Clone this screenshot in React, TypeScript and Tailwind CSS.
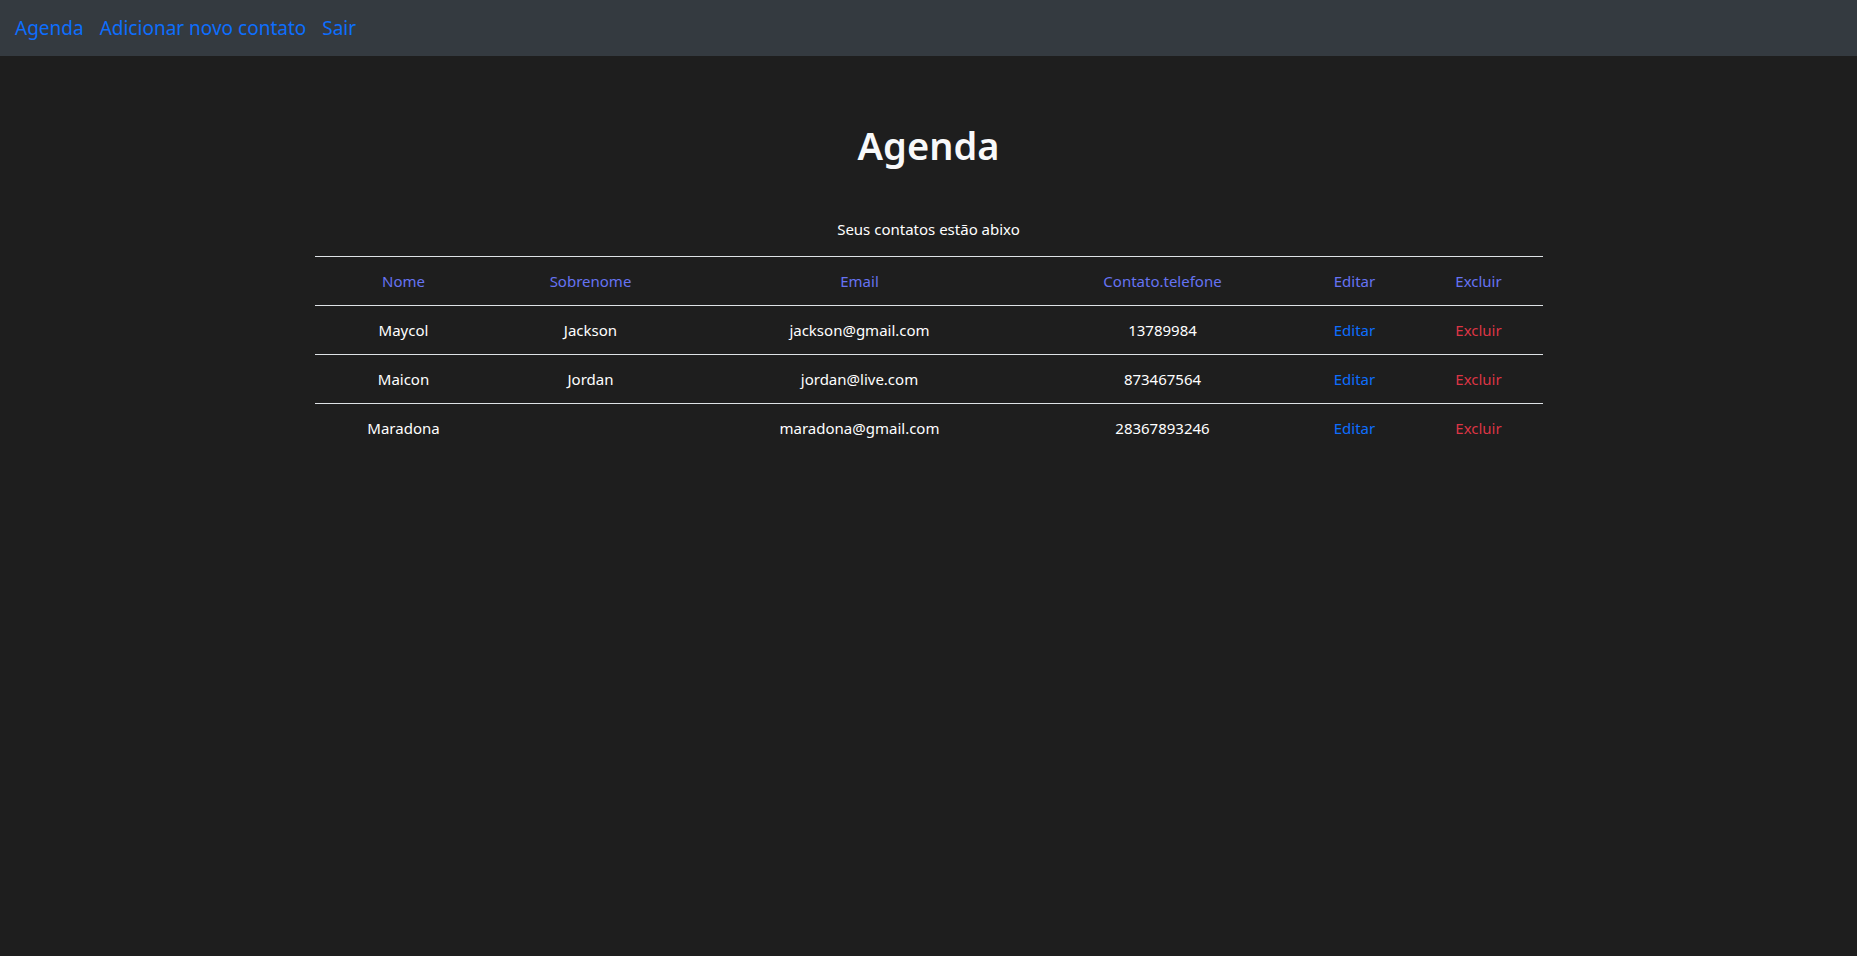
import React from "react";

const rows = [
  { nome: "Maycol", sobrenome: "Jackson", email: "jackson@gmail.com", tel: "13789984" },
  { nome: "Maicon", sobrenome: "Jordan", email: "jordan@live.com", tel: "873467564" },
  { nome: "Maradona", sobrenome: "", email: "maradona@gmail.com", tel: "28367893246" },
];

export default function App() {
  return (
    <div className="min-h-[956px] bg-[#1e1e1e] text-white" style={{ fontFamily: '"Noto Sans", "Open Sans", sans-serif' }}>
      <nav className="h-[56px] bg-[#343a40] flex items-center px-[15px] gap-[16px] text-[19px] text-[#0d6efd]">
        <a href="#">Agenda</a>
        <a href="#">Adicionar novo contato</a>
        <a href="#">Sair</a>
      </nav>
      <div className="flex flex-col items-center">
        <h1 className="mt-[65px] text-[38px] font-semibold leading-[48px] text-[#f8f9fa]">Agenda</h1>
        <p className="mt-[48px] text-[15px] leading-[24px]">Seus contatos estão abixo</p>
        <table className="mt-[15px] w-[1228px] border-collapse text-[15px] text-center">
          <thead>
            <tr className="border-y border-[#dee2e6] h-[49px] text-[#6673f2]">
              <th className="font-normal w-[178px]">Nome</th>
              <th className="font-normal w-[196px]">Sobrenome</th>
              <th className="font-normal w-[342px]">Email</th>
              <th className="font-normal w-[264px]">Contato.telefone</th>
              <th className="font-normal w-[120px]">Editar</th>
              <th className="font-normal w-[128px]">Excluir</th>
            </tr>
          </thead>
          <tbody>
            {rows.map((r, i) => (
              <tr key={i} className={(i < rows.length - 1 ? "border-b border-[#dee2e6] " : "") + "h-[49px]"}>
                <td>{r.nome}</td>
                <td>{r.sobrenome}</td>
                <td>{r.email}</td>
                <td>{r.tel}</td>
                <td><a href="#" className="text-[#0d6efd]">Editar</a></td>
                <td><a href="#" className="text-[#dc3545]">Excluir</a></td>
              </tr>
            ))}
          </tbody>
        </table>
      </div>
    </div>
  );
}
